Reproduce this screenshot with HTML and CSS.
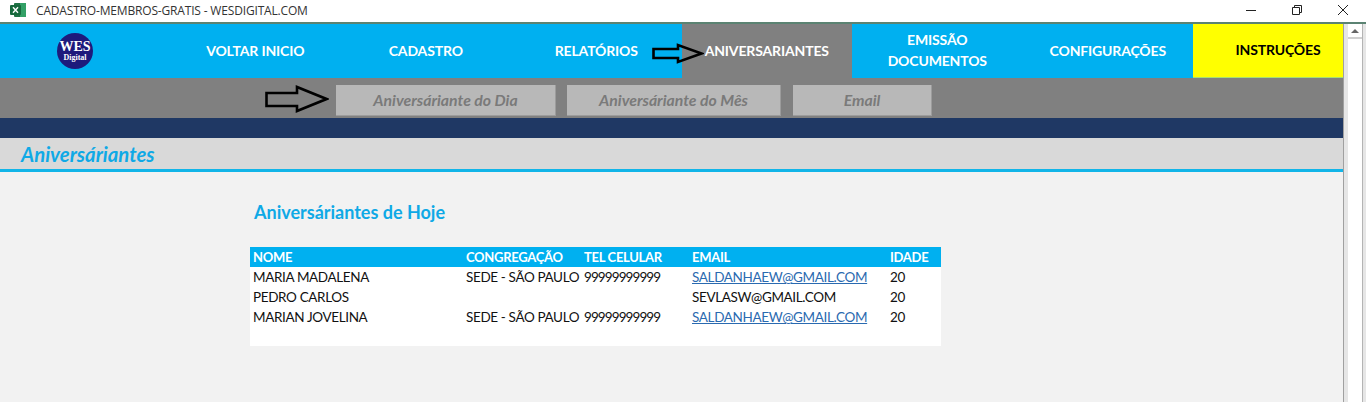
FILE: index.html
```html
<!DOCTYPE html>
<html lang="en">
<head>
  <meta charset="UTF-8">
  <meta name="viewport" content="width=device-width, initial-scale=1.0">
  <title>Cadastro Membros</title>
  <link rel="stylesheet" href="styles.css">
</head>
<body>
  <div class="titlebar">
    <svg class="excel-icon" width="16" height="14" viewBox="0 0 16 14">
      <rect x="4" y="0" width="12" height="14" rx="1" fill="#1f7244"/>
      <rect x="10" y="0" width="6" height="14" fill="#33a066"/>
      <rect x="0" y="2" width="11" height="10" rx="1" fill="#17693c"/>
      <path d="M3 4.2 L8 9.8 M8 4.2 L3 9.8" stroke="#fff" stroke-width="1.4"/>
    </svg>
    <span class="title-text">CADASTRO-MEMBROS-GRATIS - WESDIGITAL.COM</span>
    <div class="window-buttons">
      <svg width="10" height="10" viewBox="0 0 10 10"><path d="M0 5.5 H10" stroke="#222" stroke-width="1"/></svg>
      <svg width="10" height="10" viewBox="0 0 10 10" fill="none" stroke="#222"><path d="M0.5 2.5 H7.5 V9.5 H0.5 Z M2.5 2.5 V0.5 H9.5 V7.5 H7.5"/></svg>
      <svg width="10" height="10" viewBox="0 0 10 10"><path d="M0 0 L10 10 M10 0 L0 10" stroke="#222" stroke-width="1"/></svg>
    </div>
  </div>

  <div class="app">
    <div class="sheet">
      <nav class="nav">
        <div class="nav-logo">
          <div class="logo"><span class="logo-wes">WES</span><span class="logo-digital">Digital</span></div>
        </div>
        <div class="nav-item">VOLTAR INICIO</div>
        <div class="nav-item">CADASTRO</div>
        <div class="nav-item">RELATÓRIOS</div>
        <div class="nav-item active">ANIVERSARIANTES</div>
        <div class="nav-item two-line">EMISSÃO<br>DOCUMENTOS</div>
        <div class="nav-item">CONFIGURAÇÕES</div>
        <div class="nav-item yellow">INSTRUÇÕES</div>
      </nav>
      <svg class="arrow arrow-top" width="52" height="21" viewBox="0 0 52 21">
        <path d="M1.5 6 H26 V2 L49.5 10.5 L26 19 V15 H1.5 Z" fill="none" stroke="#000" stroke-width="2.6"/>
      </svg>

      <div class="subnav">
        <svg class="arrow-left" width="64" height="28" viewBox="0 0 64 28">
          <path d="M1.5 8 H32 V2 L61.5 14 L32 26 V21 H1.5 Z" fill="none" stroke="#000" stroke-width="2.6"/>
        </svg>
        <div class="sub-btn day">Aniversáriante do Dia</div>
        <div class="sub-btn month">Aniversáriante do Mês</div>
        <div class="sub-btn mail">Email</div>
      </div>

      <div class="navy-band"></div>

      <div class="section-bar">Aniversáriantes</div>

      <div class="content">
        <h2 class="content-title">Aniversáriantes de Hoje</h2>
        <table class="members">
          <colgroup>
            <col class="c-name"><col class="c-cong"><col class="c-tel"><col class="c-mail"><col class="c-age">
          </colgroup>
          <thead>
            <tr><th>NOME</th><th>CONGREGAÇÃO</th><th>TEL CELULAR</th><th>EMAIL</th><th>IDADE</th></tr>
          </thead>
          <tbody>
            <tr><td>MARIA MADALENA</td><td>SEDE - SÃO PAULO</td><td class="tel">99999999999</td><td><a href="#">SALDANHAEW@GMAIL.COM</a></td><td>20</td></tr>
            <tr><td>PEDRO CARLOS</td><td></td><td></td><td>SEVLASW@GMAIL.COM</td><td>20</td></tr>
            <tr><td>MARIAN JOVELINA</td><td>SEDE - SÃO PAULO</td><td class="tel">99999999999</td><td><a href="#">SALDANHAEW@GMAIL.COM</a></td><td>20</td></tr>
            <tr class="spacer"><td colspan="5"></td></tr>
          </tbody>
        </table>
      </div>
    </div>

    <div class="scrollbar">
      <div class="scroll-track"><div class="scroll-up"></div></div>
    </div>
  </div>
</body>
</html>
```

FILE: styles.css
```css
* {
  box-sizing: border-box;
}

body {
  margin: 0;
  height: 402px;
  overflow: hidden;
  background: #fff;
  font-family: "Lato", "Open Sans", sans-serif;
  display: flex;
  flex-direction: column;
}

.titlebar {
  height: 24px;
  flex: none;
  display: flex;
  align-items: center;
  background: #fff;
  border-bottom: 2px solid #5b8372;
  padding: 0 18px 2px 10px;
}

.excel-icon {
  flex: none;
}

.title-text {
  margin-left: 10px;
  font-family: "Open Sans", sans-serif;
  font-size: 12px;
  letter-spacing: -0.17px;
  color: #333;
}

.window-buttons {
  margin-left: auto;
  display: flex;
  gap: 36px;
}

.app {
  flex: 1;
  display: flex;
  min-height: 0;
}

.sheet {
  width: 1343px;
  flex: none;
  position: relative;
  display: flex;
  flex-direction: column;
  background: #f2f2f2;
}

/* top menu */
.nav {
  height: 54px;
  flex: none;
  display: flex;
  background: #00b0f0;
}

.nav-logo {
  width: 170px;
  padding-left: 57px;
  display: flex;
  align-items: center;
}

.logo {
  width: 36px;
  height: 36px;
  border-radius: 50%;
  background: #1d1a7c;
  color: #fff;
  display: flex;
  flex-direction: column;
  align-items: center;
  justify-content: center;
  font-family: "Liberation Serif", serif;
  font-weight: bold;
}

.logo-wes {
  font-size: 14px;
  line-height: 13px;
}

.logo-digital {
  font-size: 8px;
  line-height: 9px;
}

.nav-item {
  width: 170.5px;
  padding-bottom: 2px;
  display: flex;
  align-items: center;
  justify-content: center;
  text-align: center;
  color: #fff;
  font-size: 14px;
  font-weight: bold;
  line-height: 21px;
  letter-spacing: -0.15px;
}

.nav-item.active {
  background: #808080;
}

.nav-item.yellow {
  flex: 1;
  width: auto;
  background: #ff0;
  color: #000;
  border-bottom: 1px solid #a8e070;
  padding-left: 20px;
}

.arrow {
  position: absolute;
}

.arrow-top {
  left: 652px;
  top: 19px;
}

/* grey sub menu */
.subnav {
  height: 40px;
  flex: none;
  display: flex;
  align-items: center;
  padding: 5px 0 0 265px;
  background: #808080;
}

.arrow-left {
  flex: none;
  margin-right: 7px;
  margin-top: -3px;
}

.sub-btn {
  height: 31px;
  padding-bottom: 2px;
  display: flex;
  align-items: center;
  justify-content: center;
  background: #b8b8b8;
  border-right: 1px solid #9c9c9c;
  border-bottom: 1px solid #9c9c9c;
  color: #7a7a7a;
  font-size: 15.8px;
  font-weight: bold;
  font-style: italic;
}

.day {
  width: 220px;
  margin-right: 11px;
}

.month {
  width: 214px;
  margin-right: 12px;
}

.mail {
  width: 139px;
}

.navy-band {
  height: 20px;
  flex: none;
  background: #1f3864;
}

.section-bar {
  height: 34px;
  flex: none;
  padding: 2px 0 0 21px;
  background: #d9d9d9;
  border-bottom: 3px solid #12b5e8;
  color: #0fa9e6;
  font-size: 20.3px;
  font-weight: bold;
  font-style: italic;
  line-height: 28px;
}

/* list of the day */
.content {
  flex: 1;
  padding: 0 0 0 250px;
}

.content-title {
  margin: 30px 0 24px 4px;
  height: 21px;
  color: #0fa9e6;
  font-size: 18px;
  font-weight: bold;
  line-height: 21px;
}

.members {
  width: 691px;
  table-layout: fixed;
  border-collapse: collapse;
  background: #fff;
  font-size: 13.5px;
  color: #111;
}

.c-name { width: 213px; }
.c-cong { width: 118px; }
.c-tel { width: 108px; }
.c-mail { width: 198px; }
.c-age { width: 54px; }

.members th {
  height: 20px;
  padding: 0 0 0 3px;
  background: #00b0f0;
  color: #fff;
  font-size: 13px;
  text-align: left;
  font-weight: bold;
  white-space: nowrap;
  letter-spacing: -0.3px;
}

.members td {
  height: 20px;
  padding: 0 0 0 3px;
  white-space: nowrap;
  letter-spacing: -0.36px;
}

.members td.tel {
  letter-spacing: -0.9px;
}

.members .spacer td {
  height: 19px;
}

.members a {
  color: #2a6ab0;
}

/* excel scroll bar */
.scrollbar {
  flex: 1;
  padding: 0 3px 0 0;
  background: #e6e6e6;
  border-left: 1px solid #a0a0a0;
}

.scroll-track {
  height: 100%;
  margin-left: 4px;
  background: #fff;
  border-right: 1px solid #b4b4b4;
}

.scroll-up {
  height: 15px;
  border-bottom: 2px solid #d0d0d0;
  position: relative;
}

.scroll-up::after {
  content: "";
  position: absolute;
  left: 3px;
  top: 5px;
  border-left: 4px solid transparent;
  border-right: 4px solid transparent;
  border-bottom: 4px solid #666;
}
```
